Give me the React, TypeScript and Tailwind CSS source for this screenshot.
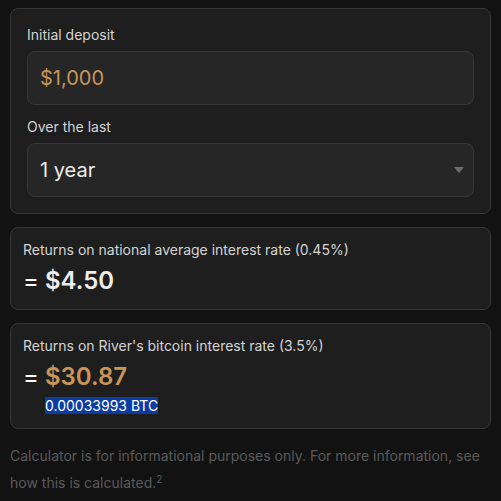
import { useState } from "react";

const Card = ({ children, className = "" }: { children: React.ReactNode; className?: string }) => (
  <div className={`rounded-lg border border-[#363636] bg-[#1e1e1e] ${className}`}>{children}</div>
);

export default function App() {
  const [deposit, setDeposit] = useState("$1,000");
  const [period, setPeriod] = useState("1 year");

  return (
    <div
      className="min-h-[501px] w-full bg-[#121212] px-[10px] pt-2 pb-4"
      style={{ fontFamily: "Inter, Roboto, 'Liberation Sans', sans-serif" }}
    >
      <div className="flex flex-col gap-[13px]">
        <Card className="px-4 pt-4 pb-4">
          <label className="block text-sm leading-5 text-[#d4d4d4]">Initial deposit</label>
          <input
            value={deposit}
            onChange={(e) => setDeposit(e.target.value)}
            className="mt-[6px] h-[54px] w-full rounded-lg border border-[#363636] bg-[#262626] px-3 text-xl text-[#c8955a] outline-none"
          />
          <label className="mt-3 block text-sm leading-5 text-[#d4d4d4]">Over the last</label>
          <div className="relative mt-[6px]">
            <select
              value={period}
              onChange={(e) => setPeriod(e.target.value)}
              className="h-[54px] w-full appearance-none rounded-lg border border-[#363636] bg-[#262626] px-3 text-xl text-[#ececec] outline-none"
            >
              <option>1 year</option>
              <option>2 years</option>
              <option>5 years</option>
            </select>
            <svg
              className="pointer-events-none absolute right-[10px] top-[24px]"
              width="10"
              height="6"
              viewBox="0 0 10 6"
            >
              <path d="M0 0h10L5 6z" fill="#6b6b6b" />
            </svg>
          </div>
        </Card>

        <Card className="px-3 pt-3 pb-3">
          <p className="text-sm leading-5 text-[#d4d4d4]">Returns on national average interest rate (0.45%)</p>
          <p className="mt-[5px] text-2xl leading-8 font-semibold text-[#ececec]">
            <span className="font-normal text-white">=</span> $4.50
          </p>
        </Card>

        <Card className="px-3 pt-3 pb-3">
          <p className="text-sm leading-5 text-[#d4d4d4]">Returns on River's bitcoin interest rate (3.5%)</p>
          <p className="mt-[5px] text-2xl leading-8 font-semibold text-[#c8955a]">
            <span className="font-normal text-white">=</span> $30.87
          </p>
          <p className="mt-[3px] pl-[22px] text-sm leading-5">
            <span className="bg-[#0b3ca3] text-white">0.00033993 BTC</span>
          </p>
        </Card>
      </div>

      <p className="mt-[13px] text-sm leading-[27px] text-[#5a5a5a]">
        Calculator is for informational purposes only. For more information, see how this is calculated.
        <sup className="text-[10px] leading-none">2</sup>
      </p>
    </div>
  );
}
